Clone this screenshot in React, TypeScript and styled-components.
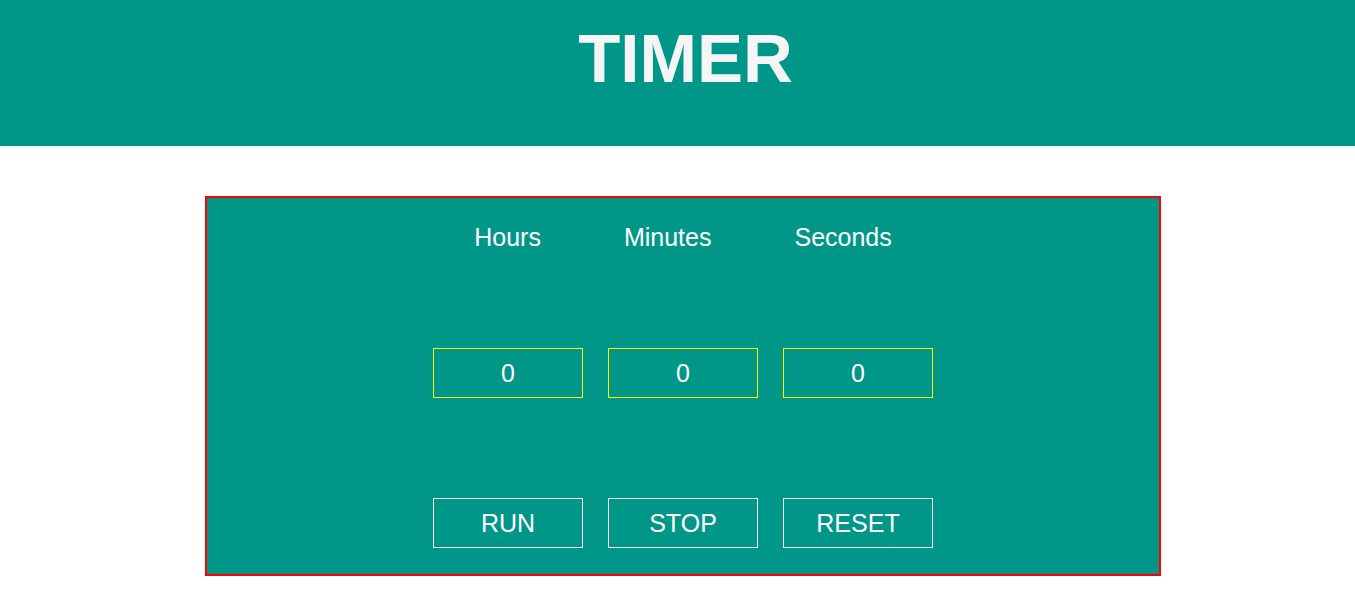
import React, { useState } from 'react';
import styled, { createGlobalStyle } from 'styled-components';

const GlobalStyle = createGlobalStyle`
  body {
    margin: 0;
    font-family: "Liberation Sans", Arial, sans-serif;
    background: #ffffff;
  }
`;

const Header = styled.header`
  box-sizing: border-box;
  height: 146px;
  padding: 19px 0 0 16px;
  background-color: #009688;
  display: flex;
  justify-content: center;
  align-items: flex-start;
`;

const Title = styled.h1`
  margin: 0;
  font-size: 69px;
  font-weight: bold;
  color: #f5f5f5;
`;

const Panel = styled.section`
  box-sizing: border-box;
  width: 956px;
  margin: 50px 0 0 205px;
  padding: 25px 0 26px;
  border: 2px solid #ff0000;
  background-color: #009688;
  display: flex;
  flex-direction: column;
  align-items: center;
`;

const LabelRow = styled.div`
  display: flex;
  justify-content: center;
  gap: 83px;
  font-size: 25px;
  line-height: 29px;
  color: #ffffff;
`;

const Row = styled.div<{ $top: number }>`
  display: flex;
  justify-content: center;
  gap: 25px;
  margin-top: ${(p) => p.$top}px;
`;

const TimeBox = styled.input`
  box-sizing: border-box;
  width: 150px;
  height: 50px;
  margin: 0;
  padding: 0;
  border: 1px solid #ffff00;
  background: transparent;
  color: #ffffff;
  font-family: inherit;
  font-size: 25px;
  text-align: center;
  outline: none;
`;

const Button = styled.button`
  box-sizing: border-box;
  width: 150px;
  height: 50px;
  margin: 0;
  padding: 0;
  border: 1px solid #ffffff;
  background: transparent;
  color: #ffffff;
  font-family: inherit;
  font-size: 25px;
  cursor: pointer;
`;

const App = () => {
  const [hours, setHours] = useState('0');
  const [minutes, setMinutes] = useState('0');
  const [seconds, setSeconds] = useState('0');

  const reset = () => {
    setHours('0');
    setMinutes('0');
    setSeconds('0');
  };

  return (
    <>
      <GlobalStyle />
      <Header>
        <Title>TIMER</Title>
      </Header>
      <Panel>
        <LabelRow>
          <span>Hours</span>
          <span>Minutes</span>
          <span>Seconds</span>
        </LabelRow>
        <Row $top={96}>
          <TimeBox value={hours} onChange={(e) => setHours(e.target.value)} />
          <TimeBox value={minutes} onChange={(e) => setMinutes(e.target.value)} />
          <TimeBox value={seconds} onChange={(e) => setSeconds(e.target.value)} />
        </Row>
        <Row $top={100}>
          <Button>RUN</Button>
          <Button>STOP</Button>
          <Button onClick={reset}>RESET</Button>
        </Row>
      </Panel>
    </>
  );
};

export default App;
